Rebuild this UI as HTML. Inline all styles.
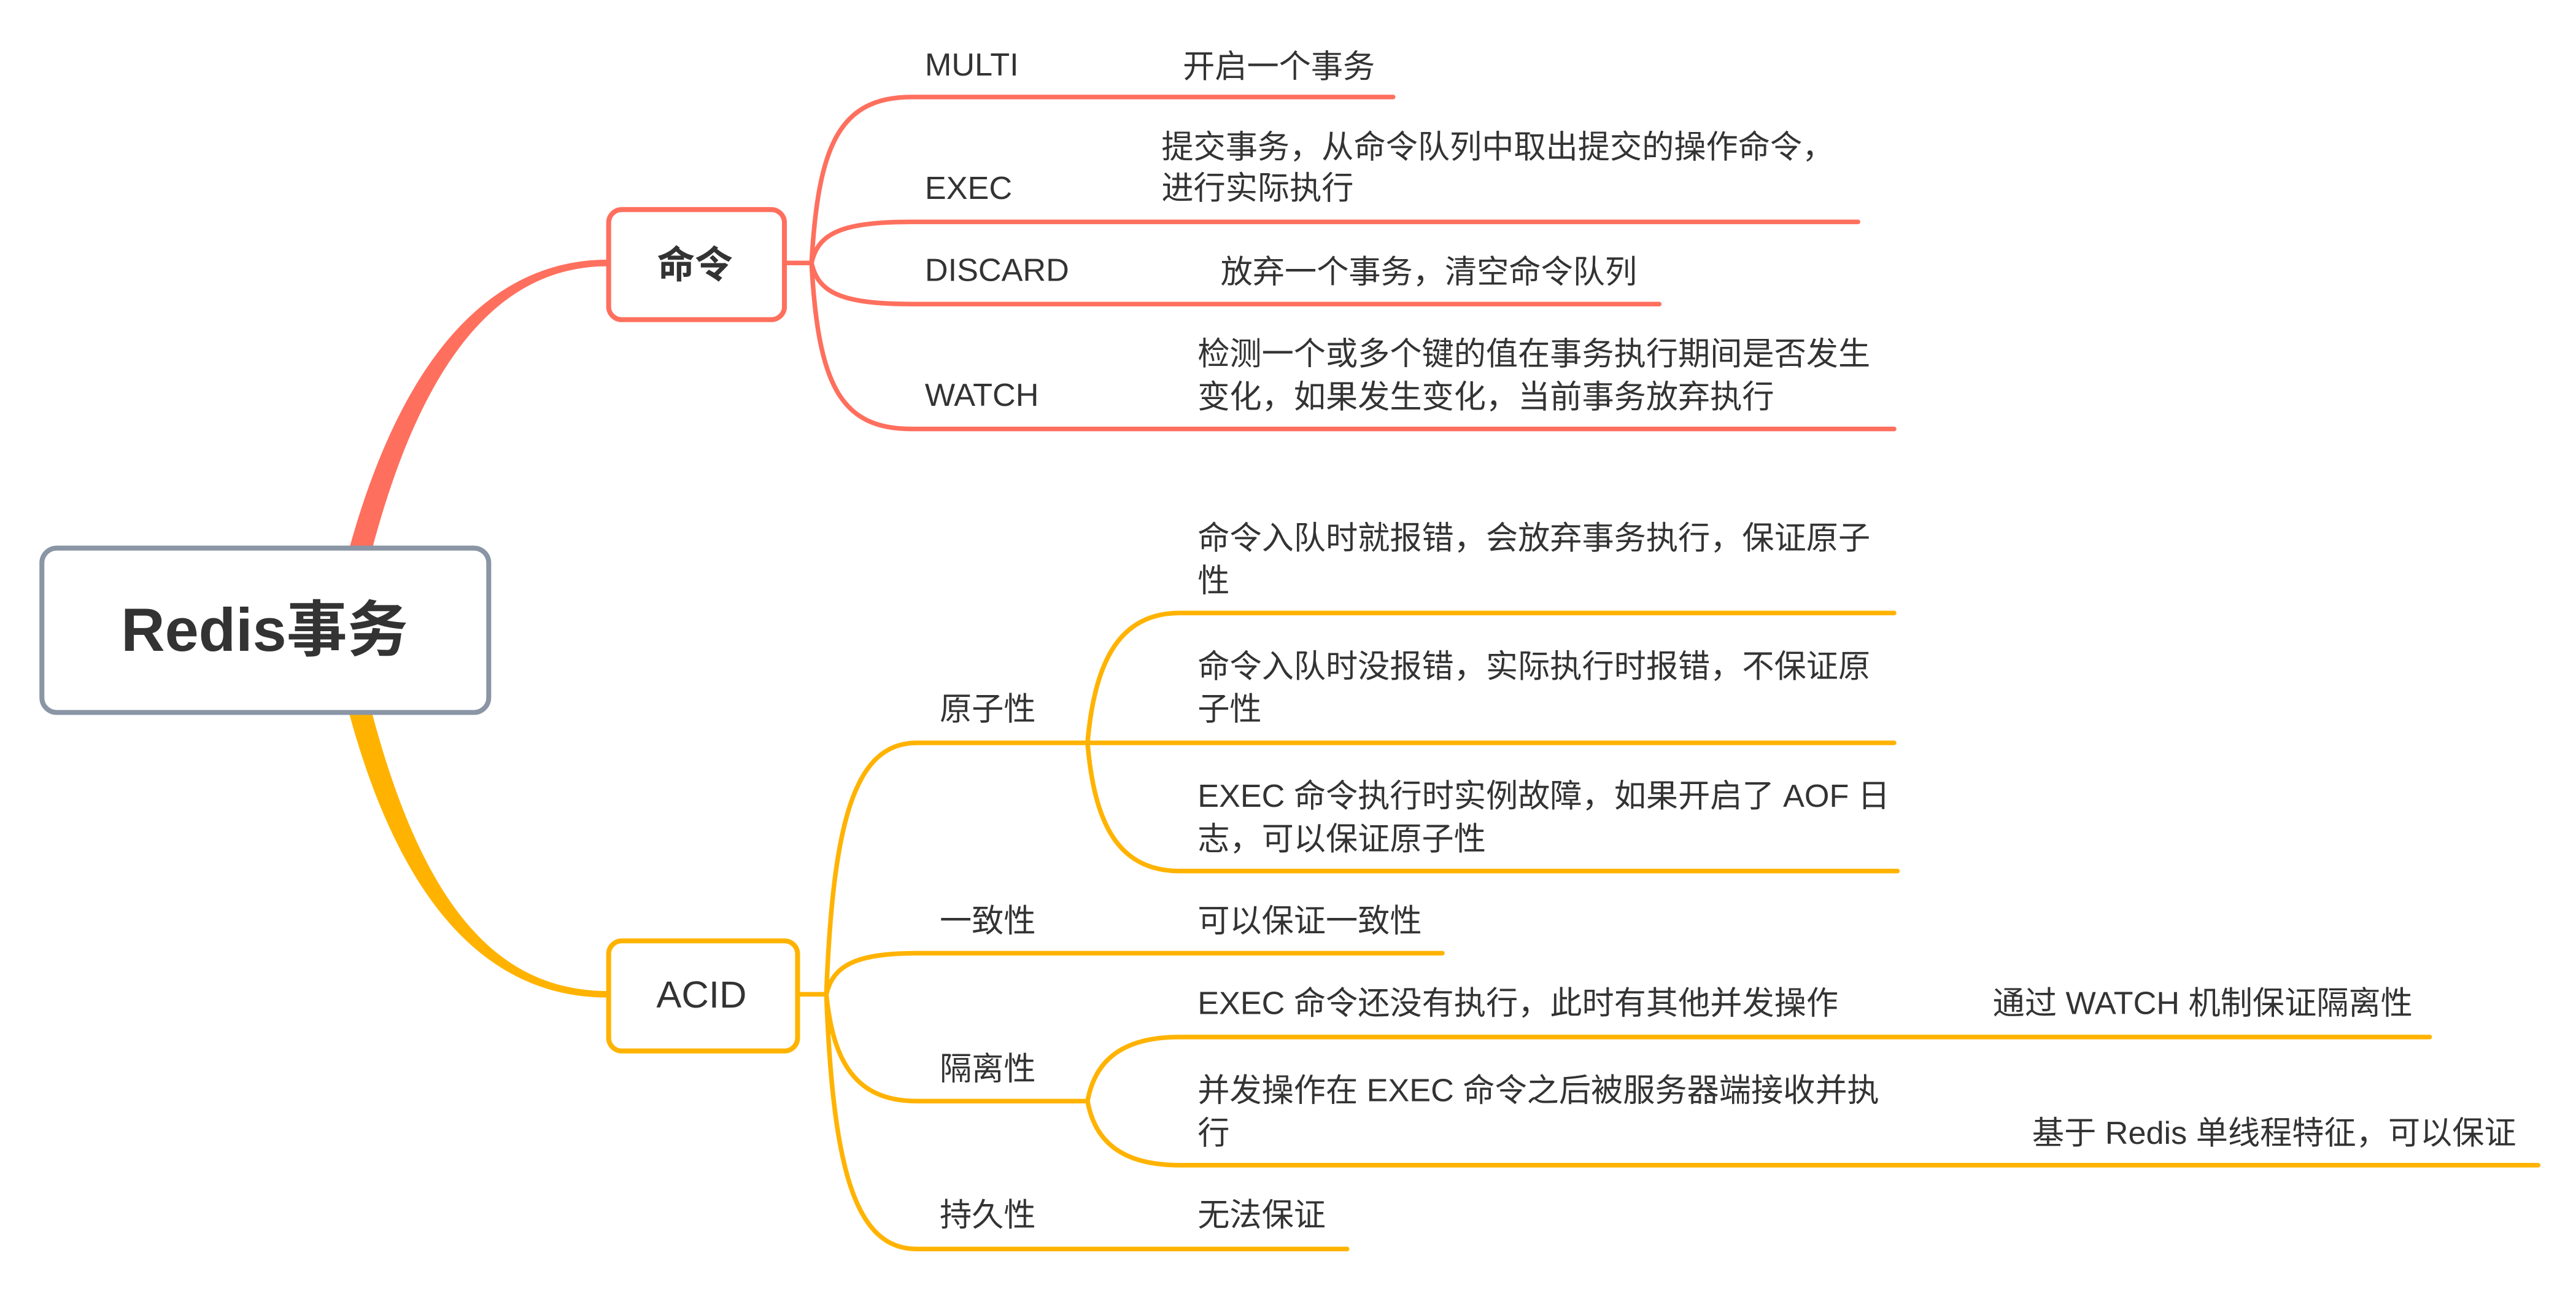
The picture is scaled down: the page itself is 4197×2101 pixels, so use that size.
<!DOCTYPE html>
<html><head><meta charset="utf-8"><style>
html,body{margin:0;padding:0;background:#fff;}
svg{display:block;}
text{font-family:"Liberation Sans","Noto Sans CJK SC",sans-serif;fill:#333;font-size:19.5px;}
</style></head><body>
<svg width="4197" height="2101" viewBox="0 0 1561 781.4" xmlns="http://www.w3.org/2000/svg">
<rect width="1561" height="781.4" fill="#fff"/>
<g transform="scale(0.9955)">
<path d="M212,336 C245,215 300,158 370,158 L370,162 C302,162 256,222 226,336 Z" fill="#ff6f5e"/>
<path d="M212,432 C245,555 300,607 370,607 L370,603 C302,603 257,550 226,432 Z" fill="#ffb300"/>
<g fill="none" stroke-width="2.8" stroke-linecap="round">
<g stroke="#ff6f5e">
<path d="M477,160 H494"/>
<path d="M494,160 C498,90 510,59 555,59 H848"/>
<path d="M494,160 C498,142 512,135 555,135 H1131"/>
<path d="M494,160 C498,178 512,185 555,185 H1010"/>
<path d="M494,160 C498,235 512,261 555,261 H1153"/>
</g>
<g stroke="#ffb300">
<path d="M486,605 H503"/>
<path d="M503,605 C507,500 520,452 558,452 H662"/>
<path d="M503,605 C507,588 520,580 558,580 H878"/>
<path d="M503,605 C507,645 520,670 558,670 H662"/>
<path d="M503,605 C507,710 520,760 558,760 H820"/>
<path d="M662,452 C666,405 680,373 718,373 H1153"/>
<path d="M662,452 H1153"/>
<path d="M662,452 C666,500 680,530 718,530 H1155"/>
<path d="M662,670 C666,648 680,631 718,631 H1479"/>
<path d="M662,670 C666,692 680,709 718,709 H1545"/>
</g>
</g>
<rect x="25.5" y="333.5" width="272" height="100" rx="9" fill="#fff" stroke="#8a95a5" stroke-width="3"/>
<text x="161" y="396" text-anchor="middle" style="font-size:37px;font-weight:bold">Redis事务</text>
<rect x="370.5" y="127.5" width="107" height="67" rx="8" fill="#fff" stroke="#ff6f5e" stroke-width="3"/>
<text x="423" y="169" text-anchor="middle" style="font-size:23px;font-weight:bold">命令</text>
<rect x="370.5" y="572.5" width="115" height="67" rx="8" fill="#fff" stroke="#ffb300" stroke-width="3"/>
<text x="427" y="613" text-anchor="middle" style="font-size:23px">ACID</text>
<text x="563" y="46">MULTI</text>
<text x="720" y="47">开启一个事务</text>
<text x="563" y="121">EXEC</text>
<text x="707" y="96">提交事务，从命令队列中取出提交的操作命令，</text>
<text x="707" y="121">进行实际执行</text>
<text x="563" y="171">DISCARD</text>
<text x="743" y="172">放弃一个事务，清空命令队列</text>
<text x="563" y="247">WATCH</text>
<text x="729" y="222">检测一个或多个键的值在事务执行期间是否发生</text>
<text x="729" y="248">变化，如果发生变化，当前事务放弃执行</text>
<text x="572" y="438">原子性</text>
<text x="729" y="334">命令入队时就报错，会放弃事务执行，保证原子</text>
<text x="729" y="360">性</text>
<text x="729" y="412">命令入队时没报错，实际执行时报错，不保证原</text>
<text x="729" y="438">子性</text>
<text x="729" y="491">EXEC 命令执行时实例故障，如果开启了 AOF 日</text>
<text x="729" y="517">志，可以保证原子性</text>
<text x="572" y="567">一致性</text>
<text x="729" y="567">可以保证一致性</text>
<text x="572" y="657">隔离性</text>
<text x="729" y="617">EXEC 命令还没有执行，此时有其他并发操作</text>
<text x="1213" y="617">通过 WATCH 机制保证隔离性</text>
<text x="729" y="670">并发操作在 EXEC 命令之后被服务器端接收并执</text>
<text x="729" y="696">行</text>
<text x="1237" y="696">基于 Redis 单线程特征，可以保证</text>
<text x="572" y="746">持久性</text>
<text x="729" y="746">无法保证</text>
</g>
</svg>
</body></html>
